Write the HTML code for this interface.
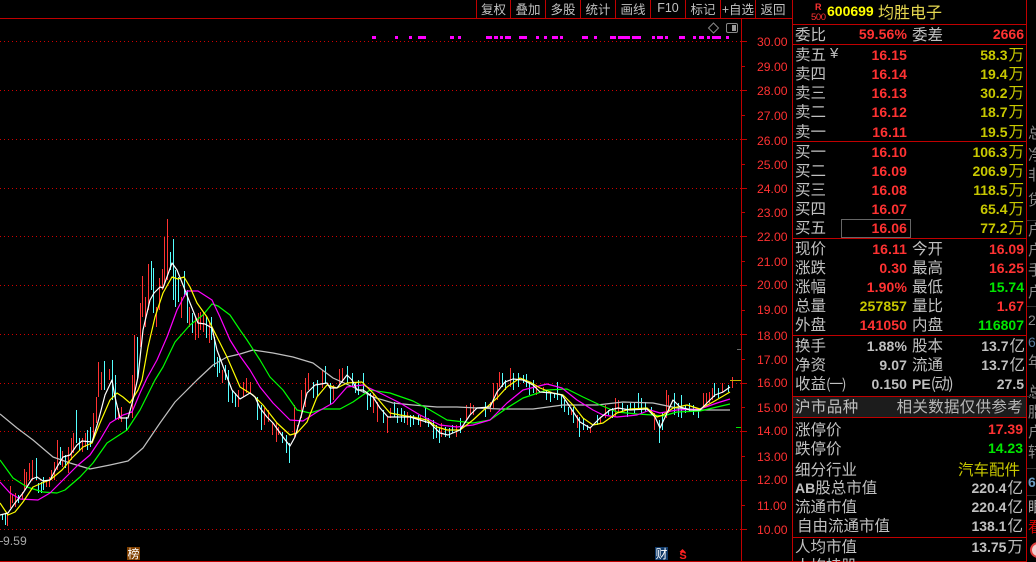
<!DOCTYPE html>
<html><head><meta charset="utf-8"><style>
html,body{margin:0;padding:0;background:#000;width:1036px;height:562px;overflow:hidden}
#r{position:relative;width:1036px;height:562px;overflow:hidden;background:#000;font-family:"WenQuanYi Zen Hei","Noto Sans CJK SC",sans-serif}
.a,.l,.m,.n,.v,.w,.c,.t,.b{position:absolute;white-space:nowrap;line-height:20px;height:20px}
.l{left:795px;font-size:15.5px;color:#c0c0c0;margin-top:-1px}
.m{left:912px;font-size:15.5px;color:#c0c0c0;margin-top:-1px}
.n{right:129px;font:bold 14px/20px "Liberation Sans",sans-serif;color:#ff3232;letter-spacing:.1px}
.v{right:12px;font:bold 14px/20px "Liberation Sans",sans-serif;color:#ff3232}
.w{right:12px;font:bold 14px/20px "Liberation Sans","WenQuanYi Zen Hei",sans-serif;color:#c8c800}
.w i{font:15.5px/1 "WenQuanYi Zen Hei",sans-serif;margin-left:1px;position:relative;top:0}
.g{color:#c0c0c0}
.y{color:#c8c800}
.gr{color:#00e600}
.a{font:12.2px/14px "Liberation Sans",sans-serif;color:#ff3232;left:757px;height:14px}
.t{font-size:12.5px;color:#c0c0c0;top:0;height:18px;line-height:17px;text-align:center}
.c{left:1028px;font-size:15px;color:#8a8a8a}
.h{position:absolute;background:#c00000}
</style></head><body><div id="r">

<svg width="792" height="562" style="position:absolute;left:0;top:0">
<g stroke="#d00000" stroke-width="1" stroke-dasharray="1 3">
<path d="M0 41.5H741M0 90.5H741M0 139.5H741M0 188.5H741M0 236.5H741M0 285.5H741M0 334.5H741M0 383.5H741M0 431.5H741M0 480.5H741M0 529.5H741"/>
</g>
<path shape-rendering="crispEdges" fill="none" stroke="#c00000" d="M741.5 19V561M741 41.5H747M741 66.5H745M741 90.5H747M741 115.5H745M741 139.5H747M741 164.5H745M741 188.5H747M741 212.5H745M741 236.5H747M741 261.5H745M741 285.5H747M741 310.5H745M741 334.5H747M741 359.5H745M741 383.5H747M741 407.5H745M741 431.5H747M741 456.5H745M741 480.5H747M741 505.5H745M741 529.5H747"/>
<path shape-rendering="crispEdges" fill="#ff00ff" d="M372 36h4v3h-4zM395 36h3v3h-3zM409 36h3v3h-3zM418 36h8v3h-8zM450 36h4v3h-4zM458 36h3v3h-3zM486 36h6v3h-6zM494 36h4v3h-4zM500 36h3v3h-3zM505 36h6v3h-6zM519 36h8v3h-8zM536 36h3v3h-3zM544 36h3v3h-3zM552 36h6v3h-6zM560 36h3v3h-3zM582 36h6v3h-6zM594 36h3v3h-3zM610 36h6v3h-6zM618 36h12v3h-12zM632 36h9v3h-9zM652 36h3v3h-3zM657 36h6v3h-6zM665 36h3v3h-3zM679 36h6v3h-6zM693 36h3v3h-3zM699 36h5v3h-5zM707 36h3v3h-3zM712 36h9v3h-9zM726 36h3v3h-3z"/>
<path fill="none" stroke="#888" d="M713.5 23l5 5-5 5-5-5z"/>
<rect x="726.5" y="23.5" width="11" height="9" rx="1.5" fill="none" stroke="#888"/><rect x="732" y="25" width="4" height="6" fill="#999"/>

<path shape-rendering="crispEdges" fill="none" stroke="#ff3232" transform="translate(.5 0)" d="M7 513V526M10 486V508M12 495V503M15 493V507M22 492V500M24 469V490M26 472V487M29 463V480M32 460V480M46 480V487M49 477V487M51 470V480M54 462V480M57 440V470M62 451V467M68 447V473M71 438V460M73 433V453M82 438V452M85 433V447M93 413V437M96 397V423M98 362V397M101 372V390M109 369V380M118 408V420M121 407V422M132 375V418M134 335V395M140 303V347M142 276V317M145 297V327M148 264V310M156 307V327M159 278V310M162 269V290M164 237V283M167 219V280M181 297V318M189 307V327M195 317V340M198 313V338M200 312V330M203 312V332M209 323V343M222 370V383M238 390V407M243 382V397M246 378V393M250 382V393M264 408V425M268 410V422M272 422V435M276 423V442M278 427V435M294 405V437M297 425V433M301 390V418M305 378V407M308 373V390M322 370V388M333 385V400M339 369V385M342 368V383M373 393V413M377 402V422M387 417V433M390 408V418M407 412V425M420 415V427M441 423V437M456 425V437M466 405V420M470 403V415M473 405V415M490 402V412M493 383V408M497 383V400M499 372V387M510 368V387M536 385V395M543 387V393M571 410V415M577 415V428M590 427V433M600 417V423M605 405V418M615 398V417M618 400V413M654 413V430M666 390V418M668 395V413M703 393V408M706 393V407M709 392V403M712 388V400M722 383V393M732 377V388"/>
<path shape-rendering="crispEdges" fill="none" stroke="#54ffff" transform="translate(.5 0)" d="M2 514V520M5 514V525M18 495V503M36 458V480M38 483V493M41 482V493M43 477V490M60 447V465M65 455V468M76 410V443M79 438V450M87 430V450M90 427V447M104 361V390M112 360V400M115 375V420M126 417V430M137 337V380M151 261V290M153 268V313M170 252V270M173 239V300M175 270V307M178 277V302M184 271V297M187 290V323M192 313V333M206 317V338M211 317V340M214 337V367M217 357V377M219 358V373M225 365V380M228 370V402M232 390V403M235 393V407M257 397V420M261 405V430M282 432V443M286 435V453M289 443V463M313 382V398M317 380V397M325 366V383M330 383V405M347 366V383M352 373V387M355 383V393M358 380V395M363 373V393M367 392V410M370 393V407M383 410V423M394 402V417M397 408V423M401 408V422M404 411V423M410 415V427M413 415V425M418 415V425M425 407V423M428 418V427M433 420V439M436 425V438M439 427V443M445 427V437M449 428V438M452 425V433M460 418V433M485 402V417M502 373V387M505 380V390M513 373V390M518 373V387M523 375V383M526 374V387M529 382V395M533 380V393M546 390V400M550 392V402M554 393V398M557 382V400M561 395V408M564 400V412M568 407V415M573 407V423M579 417V437M583 418V430M587 425V430M597 415V425M608 410V415M612 408V418M622 403V413M627 405V417M630 403V410M634 403V413M638 393V408M641 398V413M645 402V412M651 407V415M659 420V443M662 413V430M674 393V415M678 403V417M681 395V418M685 405V413M689 403V412M693 405V415M698 408V418M714 383V397M718 388V398M728 385V392"/>

<g fill="none" stroke-width="1.2" stroke-linejoin="round">
<polyline stroke="#c0c0c0" points="0,414 17,428 33,440 53,457 70,463 90,469 110,465 128,461 143,448 160,423 175,402 197,380 213,365 227,357 240,354 253,350 273,353 293,357 313,363 333,378 353,387 373,397 393,403 413,405 437,407 457,407 477,408 500,409 533,409 563,405 597,405 623,402 653,403 677,408 700,410 730,410"/>
<polyline stroke="#00ff00" points="0,460 13,478 27,487 43,492 57,493 65,490 80,477 93,463 107,443 127,430 140,410 155,380 163,367 175,342 190,325 203,315 212,304 218,306 230,315 240,330 247,340 260,360 270,377 283,390 297,410 310,413 323,409 340,409 353,402 370,390 390,393 413,401 430,410 447,420 473,423 490,420 507,408 523,398 547,390 567,389 583,397 600,405 617,412 637,414 653,415 663,416 677,412 700,411 717,407 730,404"/>
<polyline stroke="#ff00ff" points="0,482 10,493 20,499 38,500 50,493 63,480 77,466 90,455 100,440 110,423 123,415 132,412 140,393 147,378 157,360 167,337 177,310 187,291 198,291 212,300 220,317 230,340 240,356 250,370 260,387 273,403 290,420 303,421 317,412 333,403 347,387 363,385 380,393 400,403 420,415 440,425 457,427 473,425 490,420 507,403 523,390 547,384 562,388 577,400 593,410 603,415 617,417 637,415 650,410 660,413 677,410 700,409 717,403 730,399"/>
<polyline stroke="#ffff00" points="0,503 8,515 15,512 23,502 33,487 42,483 50,480 62,470 72,458 83,447 92,443 100,423 110,400 117,393 123,397 130,403 138,390 142,380 148,347 155,317 163,293 172,277 178,279 184,277 190,287 197,303 207,317 217,337 227,357 237,380 240,387 253,395 263,405 277,423 290,435 297,433 307,422 317,397 327,385 337,388 347,383 362,382 373,393 383,405 390,413 400,415 413,417 427,420 437,427 447,430 460,430 473,420 487,407 497,398 507,387 520,378 530,382 540,388 553,393 563,395 573,405 583,418 593,425 603,423 617,413 630,409 647,408 657,417 663,415 673,408 687,405 700,409 713,402 730,392"/>
<polyline stroke="#ffffff" points="0,515 8,513 15,503 23,493 32,479 37,477 43,481 50,480 57,467 63,457 70,455 77,445 82,441 92,442 98,422 105,395 112,380 115,397 120,418 128,418 133,400 138,377 143,330 150,300 154,293 160,287 163,288 172,263 177,270 183,285 190,303 198,323 205,324 212,328 217,350 227,377 232,390 240,399 250,393 255,397 260,408 267,417 273,423 283,437 290,446 295,437 302,413 307,393 315,385 327,383 330,388 337,388 347,375 352,380 357,390 363,390 373,397 380,408 388,417 397,417 410,417 420,420 430,423 440,433 448,435 460,430 470,415 477,408 490,407 497,392 505,382 513,379 523,380 533,385 540,392 552,393 562,395 572,410 580,422 590,428 600,418 610,410 618,408 630,410 647,409 655,417 660,428 667,413 673,400 680,407 690,410 700,410 707,403 715,395 723,392 730,387"/>
</g>
<path shape-rendering="crispEdges" stroke="#c8b400" d="M730 380.5H741"/>
<path shape-rendering="crispEdges" stroke="#00e600" d="M736 427.5H741"/>
<path shape-rendering="crispEdges" stroke="#666" d="M737 349.5H741"/>
<path shape-rendering="crispEdges" stroke="#999" d="M0 541.5H3"/>
<path fill="#ff2020" d="M682.5 549l3 3h-6z"/>
</svg>

<div class="h" style="left:0;top:18px;width:792px;height:1px"></div>
<div class="h" style="left:0;top:561px;width:1027px;height:1px"></div>
<div class="h" style="left:476px;top:0;width:1px;height:18px"></div>
<div class="h" style="left:510px;top:0;width:1px;height:18px"></div>
<div class="h" style="left:545px;top:0;width:1px;height:18px"></div>
<div class="h" style="left:580px;top:0;width:1px;height:18px"></div>
<div class="h" style="left:615px;top:0;width:1px;height:18px"></div>
<div class="h" style="left:650px;top:0;width:1px;height:18px"></div>
<div class="h" style="left:685px;top:0;width:1px;height:18px"></div>
<div class="h" style="left:720px;top:0;width:1px;height:18px"></div>
<div class="h" style="left:755px;top:0;width:1px;height:18px"></div>
<div class="t" style="left:477px;width:33px">复权</div>
<div class="t" style="left:511px;width:34px">叠加</div>
<div class="t" style="left:546px;width:34px">多股</div>
<div class="t" style="left:581px;width:34px">统计</div>
<div class="t" style="left:616px;width:34px">画线</div>
<div class="t" style="left:651px;width:34px;font-family:'Liberation Sans',sans-serif">F10</div>
<div class="t" style="left:686px;width:34px">标记</div>
<div class="t" style="left:721px;width:34px">+自选</div>
<div class="t" style="left:756px;width:34px">返回</div>

<div class="a" style="top:35px">30.00</div><div class="a" style="top:60px">29.00</div><div class="a" style="top:84px">28.00</div><div class="a" style="top:109px">27.00</div><div class="a" style="top:134px">26.00</div><div class="a" style="top:158px">25.00</div><div class="a" style="top:182px">24.00</div><div class="a" style="top:206px">23.00</div><div class="a" style="top:230px">22.00</div><div class="a" style="top:255px">21.00</div><div class="a" style="top:278px">20.00</div><div class="a" style="top:303px">19.00</div><div class="a" style="top:329px">18.00</div><div class="a" style="top:353px">17.00</div><div class="a" style="top:376px">16.00</div><div class="a" style="top:401px">15.00</div><div class="a" style="top:424px">14.00</div><div class="a" style="top:450px">13.00</div><div class="a" style="top:473px">12.00</div><div class="a" style="top:499px">11.00</div><div class="a" style="top:523px">10.00</div>

<div class="a" style="left:3px;top:534px;color:#a8a8a8">9.59</div>
<div style="position:absolute;left:127px;top:547px;width:13px;height:13px;background:#804000;color:#fff;font-size:12px;line-height:13px;text-align:center">榜</div>
<div style="position:absolute;left:655px;top:547px;width:13px;height:13px;background:#103a6a;color:#fff;font-size:12px;line-height:13px;text-align:center">财</div>
<div style="position:absolute;left:679px;top:551px;width:8px;height:10px;color:#ff2020;font:bold 11px/10px 'Liberation Sans',sans-serif;text-align:center">S</div>

<div class="h" style="left:792px;top:0;width:1px;height:562px"></div>
<div class="h" style="left:1026px;top:0;width:1px;height:562px"></div>
<div class="h" style="left:792px;top:24px;width:234px;height:1px"></div>
<div class="h" style="left:792px;top:44px;width:234px;height:1px"></div>
<div class="h" style="left:792px;top:141px;width:234px;height:1px"></div>
<div class="h" style="left:792px;top:238px;width:234px;height:1px"></div>
<div class="h" style="left:792px;top:335px;width:234px;height:1px"></div>
<div class="h" style="left:792px;top:396px;width:234px;height:1px"></div>
<div class="h" style="left:792px;top:417px;width:234px;height:1px"></div>
<div class="h" style="left:792px;top:537px;width:234px;height:1px"></div>
<div style="position:absolute;left:793px;top:397px;width:233px;height:20px;background:#1c1c1c"></div>
<div style="position:absolute;left:841px;top:219px;width:68px;height:17px;border:1px solid #666"></div>

<div style="position:absolute;left:815px;top:3px;font:bold 9px/9px 'Liberation Sans',sans-serif;color:#ff3232">R</div>
<div style="position:absolute;left:811px;top:13px;font:9.5px/9px 'Liberation Sans',sans-serif;letter-spacing:-.4px;color:#ff3232">500</div>
<div style="position:absolute;left:827px;top:1px;font:bold 14px/20px 'Liberation Sans',sans-serif;color:#ffff00">600699</div>
<div style="position:absolute;left:878px;top:1px;font-size:16px;line-height:20px;color:#e6d850">均胜电子</div>

<div class="l" style="top:25px">委比</div><div class="n" style="top:24px">59.56%</div><div class="m" style="top:25px">委差</div><div class="v" style="top:24px">2666</div>

<div class="l" style="top:45px">卖五</div><div style="position:absolute;left:830px;top:44px;font:15px/20px 'Liberation Sans',sans-serif;color:#c0c0c0">¥</div><div class="n" style="top:45px">16.15</div><div class="w" style="top:45px">58.3<i>万</i></div>
<div class="l" style="top:64px">卖四</div><div class="n" style="top:64px">16.14</div><div class="w" style="top:64px">19.4<i>万</i></div>
<div class="l" style="top:83px">卖三</div><div class="n" style="top:83px">16.13</div><div class="w" style="top:83px">30.2<i>万</i></div>
<div class="l" style="top:102px">卖二</div><div class="n" style="top:102px">16.12</div><div class="w" style="top:102px">18.7<i>万</i></div>
<div class="l" style="top:122px">卖一</div><div class="n" style="top:122px">16.11</div><div class="w" style="top:122px">19.5<i>万</i></div>
<div class="l" style="top:142px">买一</div><div class="n" style="top:142px">16.10</div><div class="w" style="top:142px">106.3<i>万</i></div>
<div class="l" style="top:161px">买二</div><div class="n" style="top:161px">16.09</div><div class="w" style="top:161px">206.9<i>万</i></div>
<div class="l" style="top:180px">买三</div><div class="n" style="top:180px">16.08</div><div class="w" style="top:180px">118.5<i>万</i></div>
<div class="l" style="top:199px">买四</div><div class="n" style="top:199px">16.07</div><div class="w" style="top:199px">65.4<i>万</i></div>
<div class="l" style="top:218px">买五</div><div class="n" style="top:218px">16.06</div><div class="w" style="top:218px">77.2<i>万</i></div>

<div class="l" style="top:239px">现价</div><div class="n" style="top:239px">16.11</div><div class="m" style="top:239px">今开</div><div class="v" style="top:239px">16.09</div>
<div class="l" style="top:258px">涨跌</div><div class="n" style="top:258px">0.30</div><div class="m" style="top:258px">最高</div><div class="v" style="top:258px">16.25</div>
<div class="l" style="top:277px">涨幅</div><div class="n" style="top:277px">1.90%</div><div class="m" style="top:277px">最低</div><div class="v gr" style="top:277px">15.74</div>
<div class="l" style="top:296px">总量</div><div class="n y" style="top:296px">257857</div><div class="m" style="top:296px">量比</div><div class="v" style="top:296px">1.67</div>
<div class="l" style="top:315px">外盘</div><div class="n" style="top:315px">141050</div><div class="m" style="top:315px">内盘</div><div class="v gr" style="top:315px">116807</div>

<div class="l" style="top:336px">换手</div><div class="n g" style="top:336px">1.88%</div><div class="m" style="top:336px">股本</div><div class="w g" style="top:336px;right:11px">13.7<i>亿</i></div>
<div class="l" style="top:355px">净资</div><div class="n g" style="top:355px">9.07</div><div class="m" style="top:355px">流通</div><div class="w g" style="top:355px;right:11px">13.7<i>亿</i></div>
<div class="l" style="top:374px">收益<span style="letter-spacing:-1.5px;font-size:14px">(一)</span></div><div class="n g" style="top:374px">0.150</div><div class="m" style="top:374px"><span style="font:bold 14px 'Liberation Sans',sans-serif">PE</span><span style="letter-spacing:-1.5px">(动)</span></div><div class="v g" style="top:374px">27.5</div>

<div class="l" style="top:397px;letter-spacing:.4px">沪市品种</div><div class="l" style="left:895px;top:397px;letter-spacing:.3px;width:128px;text-align:right;right:auto;color:#b8b8b8">相关数据仅供参考</div>

<div class="l" style="top:420px">涨停价</div><div class="v" style="top:419px;right:13px">17.39</div>
<div class="l" style="top:439px">跌停价</div><div class="v gr" style="top:438px;right:13px">14.23</div>
<div class="l" style="top:460px">细分行业</div><div class="l" style="left:958px;top:460px;color:#c8c800">汽车配件</div>
<div class="l" style="top:478px"><span style="font:bold 14px 'Liberation Sans',sans-serif">AB</span>股总市值</div><div class="w g" style="top:478px;right:13px">220.4<i>亿</i></div>
<div class="l" style="top:497px">流通市值</div><div class="w g" style="top:497px;right:13px">220.4<i>亿</i></div>
<div class="l" style="top:516px;left:797px">自由流通市值</div><div class="w g" style="top:516px;right:13px">138.1<i>亿</i></div>
<div class="l" style="top:537px">人均市值</div><div class="w g" style="top:537px;right:13px">13.75<i>万</i></div>
<div class="l" style="top:556px">人均持股</div>

<div class="c" style="top:123px">总</div><div class="c" style="top:145px">净</div><div class="c" style="top:165px">非</div><div class="c" style="top:190px">贷</div>
<div class="c" style="top:220px">户</div><div class="c" style="top:240px">户</div><div class="c" style="top:260px">手</div><div class="c" style="top:282px">户</div>
<div class="c" style="top:310px;font:14px/20px 'Liberation Sans'">2</div><div class="c" style="top:332px;font:14px/20px 'Liberation Sans';color:#5a7a9a">6</div><div class="c" style="top:352px">年</div><div class="c" style="top:382px">总</div>
<div class="c" style="top:402px">脂</div><div class="c" style="top:422px">户</div><div class="c" style="top:442px">转</div>
<div class="c" style="top:472px;font:bold 14px/20px 'Liberation Sans';color:#6a9ac0">6</div><div class="c" style="top:497px;color:#aaa">眼</div><div class="c" style="top:517px;color:#d00000">看</div>
<div style="position:absolute;left:1030px;top:542px;width:16px;height:16px;border-radius:50%;background:#f2d0d0;border:2px solid #e04040;box-sizing:border-box"></div>
<div class="h" style="left:1027px;top:220px;width:9px;height:1px;background:#333"></div>
<div class="h" style="left:1027px;top:306px;width:9px;height:1px;background:#333"></div>
<div class="h" style="left:1027px;top:396px;width:9px;height:1px;background:#333"></div>
<div class="h" style="left:1027px;top:468px;width:9px;height:1px;background:#333"></div>
<div class="h" style="left:1027px;top:495px;width:9px;height:1px;background:#333"></div>
</div></body></html>
